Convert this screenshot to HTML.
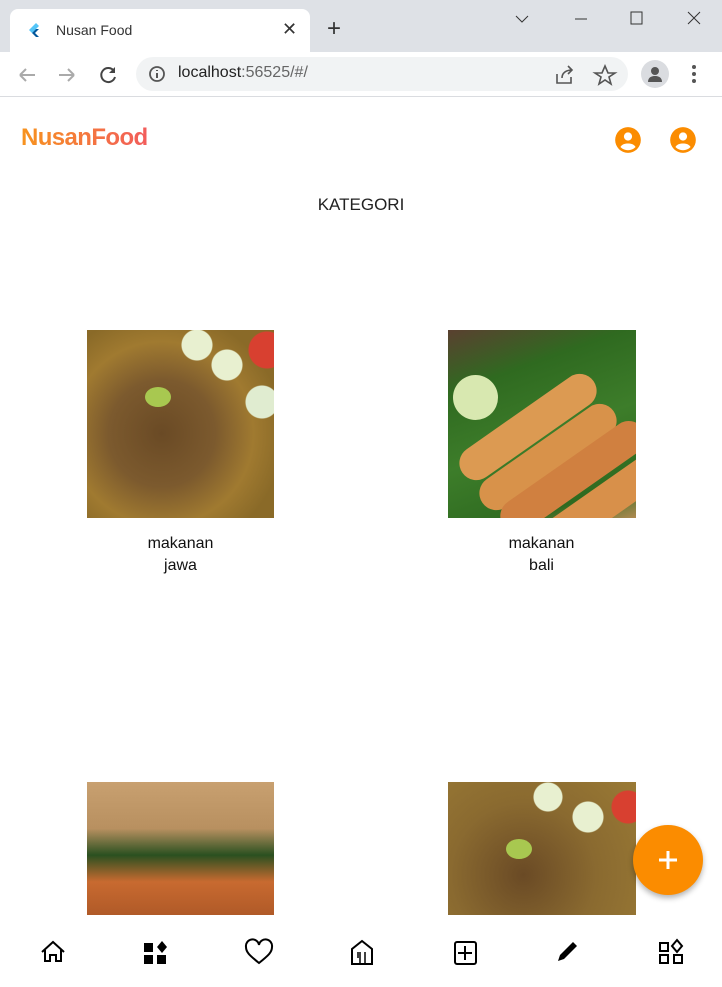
<!DOCTYPE html>
<html><head><meta charset="utf-8"><style>
*{margin:0;padding:0;box-sizing:border-box}
body{width:722px;height:987px;overflow:hidden;background:#fff;font-family:"Liberation Sans",sans-serif;position:relative}
.abs{position:absolute}
</style></head><body>
<div class="abs" style="left:0;top:0;width:722px;height:52px;background:#dee1e6"></div>
<div class="abs" style="left:10px;top:9px;width:300px;height:43px;background:#fff;border-radius:8px 8px 0 0"></div>
<svg class="abs" style="left:26px;top:22px" width="16" height="18" viewBox="0 0 16 18"><path d="M10 1L3 8l3 3 7-7z" fill="#54c5f8"/><path d="M6 11l4 4h3l-4-4 4-4h-3z" fill="#01579b"/></svg>
<div class="abs" style="left:56px;top:22px;font-size:14px;color:#333">Nusan Food</div>
<div class="abs" style="left:282px;top:19px;font-size:18px;color:#333">✕</div>
<div class="abs" style="left:327px;top:15px;font-size:24px;color:#333">+</div>
<svg class="abs" style="left:512px;top:10px" width="200" height="20"><path d="M4 6l6 6 6-6" stroke="#333" fill="none"/><path d="M63 9h12" stroke="#333"/><rect x="119" y="2" width="11" height="12" stroke="#333" fill="none"/><path d="M176 2l12 12M188 2l-12 12" stroke="#333"/></svg>
<div class="abs" style="left:0;top:52px;width:722px;height:45px;background:#fff;border-bottom:1px solid #dadce0"></div>
<svg class="abs" style="left:16px;top:64px" width="100" height="22"><path d="M4 11h15M4 11l6-6M4 11l6 6" stroke="#aaa" stroke-width="2" fill="none"/><path d="M43 11h15M58 11l-6-6M58 11l-6 6" stroke="#aaa" stroke-width="2" fill="none"/><path d="M98 7a7 7 0 1 0 1 6" stroke="#444" stroke-width="2" fill="none"/><path d="M99 3v6h-6z" fill="#444"/></svg>
<div class="abs" style="left:136px;top:57px;width:492px;height:34px;background:#f1f3f4;border-radius:17px"></div>
<svg class="abs" style="left:148px;top:65px" width="18" height="18"><circle cx="9" cy="9" r="7" stroke="#555" stroke-width="1.8" fill="none"/><path d="M9 8v5M9 5v1" stroke="#555" stroke-width="2"/></svg>
<div class="abs" style="left:178px;top:64px;font-size:16px;color:#222">localhost<span style="color:#666">:56525/#/</span></div>
<svg class="abs" style="left:554px;top:64px" width="64" height="22"><path d="M3 10v9h14v-6M8 14c0-5 4-8 10-8M14 2l4 4-4 4" stroke="#555" stroke-width="1.6" fill="none"/><path d="M51 2l3 7h7l-6 4 2 7-6-4-6 4 2-7-6-4h7z" stroke="#555" stroke-width="1.6" fill="none"/></svg>
<div class="abs" style="left:641px;top:60px;width:28px;height:28px;border-radius:50%;background:#dadce0"></div>
<svg class="abs" style="left:645px;top:64px" width="20" height="20"><circle cx="10" cy="7" r="4" fill="#555"/><path d="M3 18c0-5 4-6 7-6s7 1 7 6z" fill="#555"/></svg>
<svg class="abs" style="left:690px;top:64px" width="8" height="20"><circle cx="4" cy="3" r="2" fill="#555"/><circle cx="4" cy="10" r="2" fill="#555"/><circle cx="4" cy="17" r="2" fill="#555"/></svg>
<div class="abs" style="left:21px;top:124px;font-size:24px;font-weight:bold;letter-spacing:-0.6px;background:linear-gradient(90deg,#f7931e,#f25c5c);-webkit-background-clip:text;color:transparent">NusanFood</div>
<svg class="abs" style="left:614px;top:126px" width="28" height="28" viewBox="0 0 24 24"><circle cx="12" cy="12" r="11" fill="#fb8c00"/><circle cx="12" cy="9" r="3.5" fill="#fff"/><path d="M5.5 18c1.5-2.5 4-3 6.5-3s5 .5 6.5 3a9 9 0 0 1-13 0z" fill="#fff"/></svg>
<svg class="abs" style="left:669px;top:126px" width="28" height="28" viewBox="0 0 24 24"><circle cx="12" cy="12" r="11" fill="#fb8c00"/><circle cx="12" cy="9" r="3.5" fill="#fff"/><path d="M5.5 18c1.5-2.5 4-3 6.5-3s5 .5 6.5 3a9 9 0 0 1-13 0z" fill="#fff"/></svg>
<div class="abs" style="left:0;width:722px;top:195px;text-align:center;font-size:17px;color:#222">KATEGORI</div>
<div class="abs" style="left:87px;top:330px;width:187px;height:188px;background:radial-gradient(circle at 40% 55%,#6a4a25 0,#7c5a2e 35%,#a07a30 60%,#8a6a28 80%),#9a7a35;overflow:hidden">
 <div class="abs" style="left:80px;top:0;width:110px;height:100px;background:radial-gradient(circle at 30px 15px,#e8f0d0 15px,transparent 16px),radial-gradient(circle at 60px 35px,#e8f0d0 15px,transparent 16px),radial-gradient(circle at 100px 20px,#d84030 18px,transparent 19px),radial-gradient(circle at 95px 72px,#e0ecd0 16px,transparent 17px)"></div>
 <div class="abs" style="left:58px;top:57px;width:26px;height:20px;border-radius:50%;background:#a8c850"></div>
</div>
<div class="abs" style="left:448px;top:330px;width:188px;height:188px;background:linear-gradient(160deg,#5a4030 0,#2f6a20 25%,#3d7d2a 55%,#2e6a20 85%,#b08a50 100%);overflow:hidden">
 <div class="abs" style="left:5px;top:45px;width:45px;height:45px;border-radius:50%;background:#d8e8b0"></div>
 <div class="abs" style="left:20px;top:110px;width:160px;height:34px;border-radius:17px;background:#d8924a;transform:rotate(-35deg)"></div>
 <div class="abs" style="left:40px;top:130px;width:170px;height:34px;border-radius:17px;background:#d08040;transform:rotate(-35deg)"></div>
 <div class="abs" style="left:0;top:80px;width:160px;height:34px;border-radius:17px;background:#dc9a52;transform:rotate(-35deg)"></div>
 <div class="abs" style="left:70px;top:160px;width:160px;height:34px;border-radius:17px;background:#d8904a;transform:rotate(-35deg)"></div>
</div>
<div class="abs" style="left:0;top:533px;width:361px;text-align:center;font-size:16px;line-height:22px;color:#111">makanan<br>jawa</div>
<div class="abs" style="left:361px;top:533px;width:361px;text-align:center;font-size:16px;line-height:22px;color:#111">makanan<br>bali</div>
<div class="abs" style="left:87px;top:782px;width:187px;height:133px;background:linear-gradient(180deg,#c8a070 0,#b89060 35%,#2a5020 55%,#c86a30 75%,#b05a28 100%)"></div>
<div class="abs" style="left:448px;top:782px;width:188px;height:133px;background:radial-gradient(circle at 40% 70%,#6a4a25 0,#8a6a30 50%,#9a7a35 100%)">
 <div class="abs" style="left:80px;top:0;width:108px;height:70px;background:radial-gradient(circle at 20px 15px,#e8f0d0 14px,transparent 15px),radial-gradient(circle at 60px 35px,#e8f0d0 15px,transparent 16px),radial-gradient(circle at 100px 25px,#d84030 16px,transparent 17px)"></div>
 <div class="abs" style="left:58px;top:57px;width:26px;height:20px;border-radius:50%;background:#a8c850"></div>
</div>
<div class="abs" style="left:633px;top:825px;width:70px;height:70px;border-radius:50%;background:#fb8c00;box-shadow:0 3px 6px rgba(0,0,0,.3)"></div>
<svg class="abs" style="left:656px;top:848px" width="24" height="24"><path d="M12 3v18M3 12h18" stroke="#fff" stroke-width="3"/></svg>
<div class="abs" style="left:0;top:915px;width:722px;height:72px;background:#fff"></div>
<svg class="abs" style="left:0;top:935px" width="722" height="36">
 <path d="M42 17L53 7l11 10M45 15v11h5v-6h6v6h5V15" stroke="#000" stroke-width="2" fill="none"/>
 <rect x="144" y="8" width="9" height="9" fill="#000"/><path d="M162 6l5 6-5 6-5-6z" fill="#000"/><rect x="144" y="20" width="9" height="9" fill="#000"/><rect x="157" y="20" width="9" height="9" fill="#000"/>
 <path d="M259 28c-10-8-13-11-13-16a6 6 0 0 1 13-2 6 6 0 0 1 13 2c0 5-3 8-13 16z" stroke="#000" stroke-width="2" fill="none"/>
 <path d="M352 29V14l10-8 10 8v15z" stroke="#000" stroke-width="2" fill="none"/><path d="M358 17v6M360 17v12M365 17v12" stroke="#000" stroke-width="1.5"/>
 <rect x="455" y="7" width="21" height="22" rx="2" stroke="#000" stroke-width="2" fill="none"/><path d="M465 11v14M458 18h14" stroke="#000" stroke-width="2"/>
 <path d="M558 26l2-6 13-13 4 4-13 13z" fill="#000"/>
 <rect x="660" y="8" width="8" height="8" stroke="#000" stroke-width="2" fill="none"/><path d="M677 5l5 6-5 6-5-6z" stroke="#000" stroke-width="2" fill="none"/><rect x="660" y="20" width="8" height="8" stroke="#000" stroke-width="2" fill="none"/><rect x="674" y="20" width="8" height="8" stroke="#000" stroke-width="2" fill="none"/>
</svg>
</body></html>
